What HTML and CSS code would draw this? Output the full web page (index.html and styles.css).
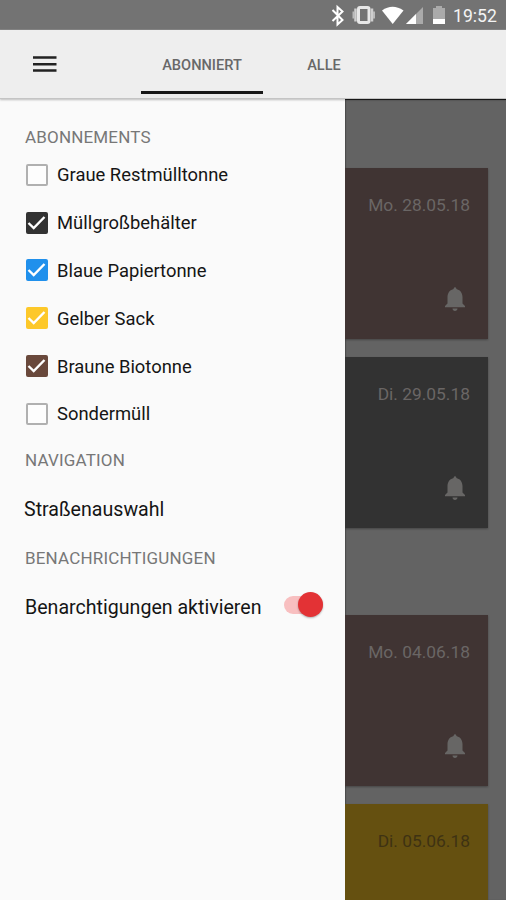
FILE: index.html
```html
<!DOCTYPE html>
<html lang="de">
<head>
<meta charset="utf-8">
<title>Abfallkalender</title>
<link rel="stylesheet" href="styles.css">
</head>
<body>
<svg width="0" height="0" class="defs">
  <symbol id="bell" viewBox="4 2 16 20"><path d="M12 22c1.100 0 2-.9 2-2h-4c0 1.100.9 2 2 2zm6-6v-5c0-3.070-1.640-5.640-4.500-6.320L12 2.500 10.500 4.680C7.630 5.360 6 7.920 6 11v5l-2 2v1h16v-1l-2-2z"/></symbol>
  <symbol id="check" viewBox="0 0 22 22"><path d="M2.500 11l5.200 5L18.500 5" fill="none" stroke="#fff" stroke-width="2.400"/></symbol>
</svg>
<header class="status">
  <svg class="status-icons" viewBox="0 0 120 30">
    <path d="M12.500 10l10 10-5 4.500V7l5 4.500-10 9.500" fill="none" stroke="#fff" stroke-width="2"/>
    <rect x="38.500" y="7.500" width="10.500" height="15" rx="1.500" fill="none" stroke="#e8e8e8" stroke-width="3"/>
    <path d="M35.500 8.500v13M52 8.500v13" stroke="#cfcfcf" stroke-width="2.500"/><path d="M33.500 11.500v7M54 11.500v7" stroke="#bbb" stroke-width="2"/>
    <path d="M62 10.500Q72.500 3 83.500 10.500L72.700 24z" fill="#fff"/>
    <path d="M103 7v17H86z" fill="#aaa"/><path d="M96 14v10H86z" fill="#fff"/>
    <path d="M113 8h3V6h6v2h3v16h-12z" fill="#aaa"/><path d="M113 19h12v5h-12z" fill="#fff"/>
  </svg>
  <span class="clock">19:52</span>
</header>
<nav class="appbar">
  <svg class="menu" viewBox="0 0 24 18"><path d="M0 2.500h23.500M0 9.300h23.500M0 15.500h23.500" stroke="#222" stroke-width="2.400"/></svg>
  <div class="tab active"><span>ABONNIERT</span></div>
  <div class="tab"><span>ALLE</span></div>
</nav>
<main class="content">
  <aside class="drawer">
    <h2>ABONNEMENTS</h2>
    <ul class="bins">
      <li><i class="box"></i><span>Graue Restmülltonne</span></li>
      <li><i class="box dark"><svg><use href="#check"/></svg></i><span>Müllgroßbehälter</span></li>
      <li><i class="box blue"><svg><use href="#check"/></svg></i><span>Blaue Papiertonne</span></li>
      <li><i class="box yellow"><svg><use href="#check"/></svg></i><span>Gelber Sack</span></li>
      <li><i class="box brown"><svg><use href="#check"/></svg></i><span>Braune Biotonne</span></li>
      <li><i class="box"></i><span>Sondermüll</span></li>
    </ul>
    <h2 class="nav-title">NAVIGATION</h2>
    <a class="link"><span>Straßenauswahl</span></a>
    <h2 class="note-title">BENACHRICHTIGUNGEN</h2>
    <div class="setting"><span>Benarchtigungen aktivieren</span><div class="switch"><b></b></div></div>
  </aside>
  <section class="list">
    <article class="card c-brown"><time>Mo. 28.05.18</time><svg><use href="#bell"/></svg></article>
    <article class="card c-dark"><time>Di. 29.05.18</time><svg><use href="#bell"/></svg></article>
    <article class="card c-brown week"><time>Mo. 04.06.18</time><svg><use href="#bell"/></svg></article>
    <article class="card c-yellow"><time>Di. 05.06.18</time></article>
  </section>
</main>
</body>
</html>
```

FILE: styles.css
```css
* { box-sizing: border-box; }
body { margin: 0; width: 506px; height: 900px; overflow: hidden; display: flex; flex-direction: column; font-family: Roboto, sans-serif; color: #151515; background: #fafafa; }
.defs { position: absolute; }
.status { height: 30px; flex: none; background: #737373; display: flex; justify-content: flex-end; align-items: center; padding-right: 9px; border-bottom: 1px solid #858585; }
.status-icons { width: 120px; height: 30px; overflow: visible; margin-right: 13px; }
.clock { color: #f4f4f4; font-size: 17.6px; line-height: 30px; padding-top: 2px; width: 44px; white-space: nowrap; }
.appbar { height: 69px; flex: none; background: #eee; display: flex; padding-left: 33px; border-bottom: 1px solid #c4c4c4; box-shadow: 0 1px 2px rgba(0,0,0,.25); z-index: 1; }
.menu { width: 24px; height: 18px; margin: 25px 84px 0 0; }
.tab { width: 122px; height: 64px; padding-top: 6px; display: flex; align-items: center; justify-content: center; font-size: 14.6px; font-weight: 500; color: #686868; }
.tab.active { border-bottom: 3px solid #191919; padding-top: 9px; }
.content { flex: 1; min-height: 0; display: flex; overflow: hidden; }
.drawer { width: 345px; background: #fafafa; padding: 27px 22px 0 25px; }
h2 { margin: 0; height: 22px; line-height: 22px; font-size: 17px; letter-spacing: .17px; font-weight: 400; color: #777; white-space: nowrap; }
.bins { list-style: none; margin: 3px 0 0; padding: 0 0 0 1px; }
.bins li { display: flex; align-items: center; height: 47.8px; font-size: 18.4px; white-space: nowrap; }
.box { width: 22px; height: 22px; margin-right: 9px; border: 2px solid #b0b0b0; border-radius: 2px; background: #fdfdfd; }
.box svg { display: block; width: 22px; height: 22px; margin: -2px; }
.box.dark { background: #323232; border-color: #323232; }
.box.blue { background: #2090ec; border-color: #2090ec; }
.box.yellow { background: #fdc829; border-color: #fdc829; }
.box.brown { background: #69483b; border-color: #69483b; }
.nav-title { margin-top: 11px; }
.link { display: block; margin: 27px 0 0 -1px; height: 24px; line-height: 24px; font-size: 19.6px; }
.note-title { margin-top: 25px; }
.setting { display: flex; justify-content: space-between; align-items: center; margin-top: 26px; height: 26px; font-size: 19.6px; white-space: nowrap; }
.switch { width: 39px; height: 18px; margin-top: -6px; display: flex; align-items: center; justify-content: flex-end; border-radius: 9px; background: #f8bfc0; }
.switch b { width: 25px; height: 25px; flex: none; border-radius: 50%; background: #e33235; box-shadow: 0 1px 2px rgba(0,0,0,.3); }
.list { flex: 1; overflow: hidden; background: #636363; border-top: 1px solid #1c1c1c; padding: 68px 18px 0 0; box-shadow: inset 1px 0 1px rgba(0,0,0,.25); }
.card { height: 171px; margin-bottom: 18px; padding: 24px 18px 0 0; display: flex; flex-direction: column; align-items: flex-end; color: #6a6665; fill: #676665; box-shadow: 0 1px 2px rgba(0,0,0,.3); }
.card time { font-size: 17.4px; line-height: 26px; height: 26px; white-space: nowrap; }
.card svg { width: 20px; height: 25px; margin: 68px 5px 0 0; }
.c-brown { background: #403433; }
.c-dark { background: #323232; }
.c-yellow { height: 96px; margin-bottom: 0; background: #655010; color: #3e3213; }
.week { margin-top: 87px; }
```
